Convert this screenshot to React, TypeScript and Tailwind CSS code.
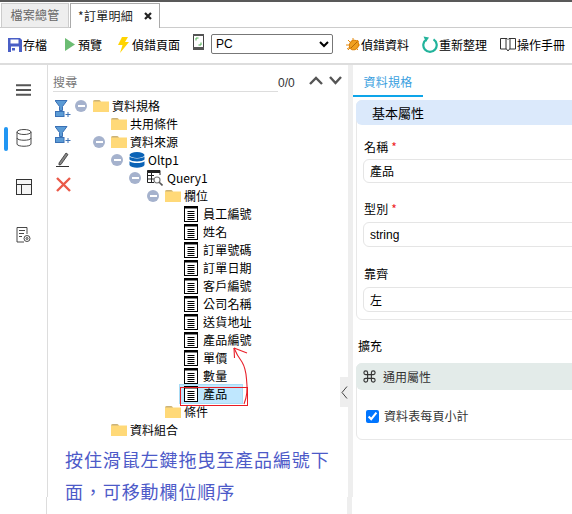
import React from "react";

const font = { fontFamily: '"Noto Sans CJK TC", "Noto Sans", sans-serif' };

function Folder() {
  return (
    <svg width="16" height="12" viewBox="0 0 16 12" className="shrink-0">
      <path d="M0 2 Q0 0 2 0 H6 Q7 0 8 1.5 H16 V12 H0 Z" fill="#ffd978" />
      <path d="M0 2 Q0 0 2 0 H6 Q7 0 8 1.5 H0 Z" fill="#c9b27a" />
    </svg>
  );
}

function Minus() {
  return (
    <span className="w-3 h-3 rounded-full bg-[#a5b2cd] flex items-center justify-center shrink-0">
      <span className="w-[7px] h-[2px] bg-white block" />
    </span>
  );
}

function Doc() {
  return (
    <svg width="14" height="16" viewBox="0 0 14 16" className="shrink-0 ml-px">
      <rect x="0.5" y="0.5" width="13" height="15" fill="#fff" stroke="#000" />
      <rect x="0" y="0" width="14" height="2.5" fill="#000" />
      <path d="M3.5 5.5H10.5M3.5 7.5H10.5M3.5 9.5H10.5M3.5 11.5H10.5M3.5 13.5H10.5" stroke="#000" strokeWidth="1" />
    </svg>
  );
}

function Db() {
  return (
    <svg width="16" height="16" viewBox="0 0 16 16" className="shrink-0">
      <ellipse cx="8" cy="3" rx="7.5" ry="3" fill="#0b63b6" />
      <path d="M.5 4.6C2 7 14 7 15.5 4.6V7.5C14 10 2 10 .5 7.5Z" fill="#0b63b6" />
      <path d="M.5 9.2C2 11.6 14 11.6 15.5 9.2V13C14 16.5 2 16.5 .5 13Z" fill="#0b63b6" />
    </svg>
  );
}

function QueryIcon() {
  return (
    <svg width="16" height="16" viewBox="0 0 16 16" className="shrink-0">
      <path d="M.5 .5H13V2.5H.5ZM.5 2.5V12.5H7M.5 5.5H7M.5 9H7M4.5 2.5V12.5M13 2.5V5" fill="none" stroke="#222" />
      <rect x=".5" y=".5" width="12.5" height="2" fill="#222" />
      <circle cx="10" cy="10" r="3" fill="#fff" stroke="#777" strokeWidth="1.2" />
      <path d="M12.2 12.2L15.5 15.5" stroke="#555" strokeWidth="1.6" />
    </svg>
  );
}

const pad: Record<number, string> = {
  0: "pl-0",
  1: "pl-[18px]",
  2: "pl-[36px]",
  3: "pl-[54px]",
  4: "pl-[72px]",
  5: "pl-[90px]",
};

type Row = { l: number; t: string; toggle?: boolean; icon: "f" | "d" | "q" | "l"; sel?: boolean };

const rows: Row[] = [
  { l: 0, t: "資料規格", toggle: true, icon: "f" },
  { l: 1, t: "共用條件", icon: "f" },
  { l: 1, t: "資料來源", toggle: true, icon: "f" },
  { l: 2, t: "Oltp1", toggle: true, icon: "d" },
  { l: 3, t: "Query1", toggle: true, icon: "q" },
  { l: 4, t: "欄位", toggle: true, icon: "f" },
  { l: 5, t: "員工編號", icon: "l" },
  { l: 5, t: "姓名", icon: "l" },
  { l: 5, t: "訂單號碼", icon: "l" },
  { l: 5, t: "訂單日期", icon: "l" },
  { l: 5, t: "客戶編號", icon: "l" },
  { l: 5, t: "公司名稱", icon: "l" },
  { l: 5, t: "送貨地址", icon: "l" },
  { l: 5, t: "產品編號", icon: "l" },
  { l: 5, t: "單價", icon: "l" },
  { l: 5, t: "數量", icon: "l" },
  { l: 5, t: "產品", icon: "l", sel: true },
  { l: 4, t: "條件", icon: "f" },
  { l: 1, t: "資料組合", icon: "f" },
];

function TreeRow({ r }: { r: Row }) {
  return (
    <div className={"h-[18px] flex items-center text-[12px] leading-[18px] text-black " + pad[r.l]}>
      <span className="w-3 h-3 mr-[6px] shrink-0 flex">{r.toggle ? <Minus /> : null}</span>
      <span
        className={
          "flex items-center h-[18px] " +
          (r.sel ? "bg-[#bfe7fe] -ml-[3px] pl-[3px] w-[62px] outline outline-1 outline-[#a9dcf5]" : "")
        }
      >
        {r.icon === "f" && <Folder />}
        {r.icon === "d" && <Db />}
        {r.icon === "q" && <QueryIcon />}
        {r.icon === "l" && <Doc />}
        <span className={r.icon === "l" ? "ml-[5px] tracking-[0.2px]" : r.icon === "q" ? "ml-1" : "ml-[3px]"}>{r.t}</span>
      </span>
    </div>
  );
}

function ToolBtn({ icon, text, cls }: { icon: React.ReactNode; text: string; cls: string }) {
  return (
    <span className={"flex items-center text-[12px] text-black whitespace-nowrap " + cls}>
      {icon}
      <span>{text}</span>
    </span>
  );
}

function Funnel() {
  return (
    <svg width="16" height="18" viewBox="0 0 16 18">
      <path d="M0 .5H12L7.5 6.5V10.5H4.5V6.5Z" fill="#5b9bd5" stroke="#3a70b5" />
      <rect x=".5" y="11.5" width="8.5" height="5" fill="#5b9bd5" stroke="#3a70b5" />
      <path d="M10.5 14.5H15.5M13 12V17" stroke="#3a70b5" />
    </svg>
  );
}

export default function App() {
  return (
    <div className="w-[572px] h-[514px] overflow-hidden bg-white flex flex-col relative" style={font}>
      <div className="h-[2px] bg-[#595959] shrink-0" />
      <div className="h-[26px] shrink-0 flex items-end pl-px border-b border-[#ccc] relative">
        <div className="w-[68px] h-[24px] pb-px bg-[#eeeeee] border border-[#ccc] border-b-0 flex items-center justify-center text-[12px] text-[#666] tracking-[0.3px]">
          檔案總管
        </div>
        <div className="ml-px w-[90px] h-[25px] pb-px -mb-px bg-white border border-[#aaa] border-b-0 flex items-center pl-[7px] text-[12px] text-[#222] tracking-[0.3px]">
          <span>*訂單明細</span>
          <svg width="8" height="8" viewBox="0 0 8 8" className="ml-[11px]">
            <path d="M1 1L7 7M7 1L1 7" stroke="#222" strokeWidth="2.2" />
          </svg>
        </div>
      </div>
      <div className="h-[37px] shrink-0 pb-[2px] border-b-2 border-[#ddd] flex items-center">
        <ToolBtn
          cls="ml-2"
          text="存檔"
          icon={
            <svg width="14" height="14" viewBox="0 0 14 14" className="mr-px">
              <path d="M0 0H12L14 2V14H0Z" fill="#4a5fc6" />
              <rect x="2.5" y="1.5" width="8" height="4" fill="#fff" />
              <rect x="3" y="8.5" width="8" height="5.5" fill="#fff" />
              <rect x="4" y="10" width="3" height="2.5" fill="#4a5fc6" />
            </svg>
          }
        />
        <ToolBtn
          cls="ml-[18px]"
          text="預覽"
          icon={
            <svg width="10" height="13" viewBox="0 0 10 13" className="mr-[3px]">
              <path d="M0 0L10 6.5L0 13Z" fill="#6cbd73" />
            </svg>
          }
        />
        <ToolBtn
          cls="ml-[16px]"
          text="偵錯頁面"
          icon={
            <svg width="11" height="16" viewBox="0 0 11 16" className="mr-[3px]">
              <path d="M4 0H10L7 5H11L2 16L4.5 8H0Z" fill="#ffd400" />
            </svg>
          }
        />
        <svg width="11" height="16" viewBox="0 0 11 16" className="ml-[13px] mb-[6px]">
          <rect x=".5" y=".5" width="10" height="15" rx="1" fill="#fff" stroke="#444" />
          <rect x="0" y="0" width="11" height="2" fill="#555" />
          <rect x="0" y="13" width="11" height="3" fill="#555" />
          <path d="M3 4V6.5M3 4H5.5M8 11V8.5M8 11H5.5" stroke="#4caf50" fill="none" />
        </svg>
        <select
          defaultValue="PC"
          className="ml-[7px] w-[122px] h-[20px] mb-[2px] border border-[#777] rounded-[2px] bg-white text-[12px] text-black pl-0"
          style={{ fontFamily: '"Liberation Sans", sans-serif' }}
        >
          <option>PC</option>
        </select>
        <ToolBtn
          cls="ml-3"
          text="偵錯資料"
          icon={
            <svg width="16" height="16" viewBox="0 0 16 16">
              <path d="M1 8H15M8 1L8 3M3 3L13 13M13 3L3 13M2 12L14 4" stroke="#e58a0d" strokeWidth="1" />
              <ellipse cx="9" cy="8" rx="4.5" ry="5" transform="rotate(35 9 8)" fill="#f0a020" stroke="#d97f06" />
              <path d="M6 11L12 5" stroke="#b96a05" />
            </svg>
          }
        />
        <ToolBtn
          cls="ml-[13px]"
          text="重新整理"
          icon={
            <svg width="16" height="17" viewBox="0 0 16 17" className="mr-px">
              <path d="M11.5 3.4A6.7 6.7 0 1 1 4.5 3.4" fill="none" stroke="#22b39b" strokeWidth="2.2" />
              <path d="M1.5 .5L7 1.5L4 6Z" fill="#22b39b" />
            </svg>
          }
        />
        <ToolBtn
          cls="ml-[13px]"
          text="操作手冊"
          icon={
            <svg width="16" height="15" viewBox="0 0 16 15" className="mr-px">
              <path d="M.5 1.5H7L8 2.5L9 1.5H15.5V12H9.5L8 14L6.5 12H.5ZM6 1.5V12M10 1.5V12" fill="#fff" stroke="#333" />
            </svg>
          }
        />
      </div>

      <div className="flex-1 flex min-h-0">
        <aside className="w-[48px] shrink-0 border-r border-[#ddd] flex flex-col items-center relative">
          <svg width="15" height="12" viewBox="0 0 15 12" className="mt-[19px]">
            <path d="M0 1.2H15M0 6H15M0 10.8H15" stroke="#555" strokeWidth="2" />
          </svg>
          <svg width="16" height="18" viewBox="0 0 16 18" className="mt-[33px]" fill="none" stroke="#4a4a4a" strokeWidth="1">
            <ellipse cx="8" cy="3" rx="7" ry="2.5" />
            <path d="M1 3V15C1 18 15 18 15 15V3M1 9C1 12 15 12 15 9" />
          </svg>
          <span className="absolute left-1 top-[62px] w-[4px] h-6 rounded-full bg-[#2196f3]" />
          <svg width="16" height="16" viewBox="0 0 16 16" className="mt-[32px]" fill="#f5f5f5" stroke="#333">
            <rect x=".5" y=".5" width="15" height="15" />
            <path d="M.5 5.5H15.5M5.5 5.5V15.5" />
          </svg>
          <svg width="15" height="16" viewBox="0 0 15 16" className="mt-[32px]" fill="none" stroke="#333" strokeWidth=".9">
            <path d="M8 15H1V.5H11V7" />
            <path d="M3 3.5H9M3 6.5H8M3 9.5H6" />
            <circle cx="11" cy="11.5" r="3" />
            <circle cx="11" cy="11.5" r="1" />
          </svg>
        </aside>

        <main className="w-[300px] shrink-0 relative flex flex-col">
          <div className="ml-[5px] h-[26px] mt-px flex items-end text-[12px] shrink-0">
            <span className="w-[225px] border-b border-[#ddd] text-[#777] leading-[18px] tracking-[0.3px]">搜尋</span>
            <span className="leading-[18px] text-[#333]" style={{ fontFamily: '"Liberation Sans", sans-serif' }}>0/0</span>
            <svg width="14" height="9" viewBox="0 0 14 9" className="ml-[14px] mb-[7px]" fill="none" stroke="#555" strokeWidth="2.4">
              <path d="M1 8L7 2L13 8" />
            </svg>
            <svg width="13" height="9" viewBox="0 0 13 9" className="ml-[6px] mb-[7px]" fill="none" stroke="#555" strokeWidth="2.4">
              <path d="M1 1L6.5 7L12 1" />
            </svg>
          </div>
          <div className="flex pt-[5px]">
            <div className="w-[27px] shrink-0 flex flex-col items-end pt-[3px] pr-[4px] gap-[8px]">
              <Funnel />
              <Funnel />
              <svg width="14" height="15" viewBox="0 0 14 15" className="mr-px" fill="none">
                <path d="M3 11L10 1L12 2.5L5 12.5L3 13Z" fill="#888" stroke="#333" strokeWidth=".8" />
                <path d="M0 14.5H13" stroke="#333" />
              </svg>
              <svg width="15" height="15" viewBox="0 0 15 15" className="mt-[2px]">
                <path d="M1 1L14 14M14 1L1 14" stroke="#ea5b4a" strokeWidth="2.4" />
              </svg>
            </div>
            <div className="flex-1 min-w-0">
              {rows.map((r, i) => (
                <TreeRow key={i} r={r} />
              ))}
              <div className="-ml-[10px] mt-[4px] w-[290px] text-[18px] leading-[32px] tracking-[0.9px] text-[#4d5ac8]">
                按住滑鼠左鍵拖曳至產品編號下面，可移動欄位順序
              </div>
            </div>
          </div>

          <div className="absolute -right-px top-[312px] w-[9px] h-[30px] bg-[#eeeeee] flex items-center justify-center">
            <svg width="7" height="13" viewBox="0 0 7 13" fill="none" stroke="#444">
              <path d="M6 .5L1 6.5L6 12.5" />
            </svg>
          </div>

          <div className="absolute left-[132px] top-[322px] w-[68px] h-[19px] border border-[#e81c24]" />
          <svg width="18" height="60" viewBox="0 0 18 60" className="absolute left-[185px] top-[282px]" fill="none" stroke="#e8202a" strokeWidth="1.1">
            <path d="M1 1C3 6 6 11 9 15C12 20 13 25 13.5 32C14.5 40 14 50 11 57" />
            <path d="M1 1L14 6M1 1L1.5 11" />
          </svg>
        </main>

        <div className="w-[5px] shrink-0 bg-[#eeeeee]" />

        <section className="flex-1 min-w-0 overflow-hidden text-[12px] text-black">
          <div className="w-[70px] h-[32px] pt-[3px] border-b-2 border-[#0ea5e9] flex items-center justify-center text-[12px] text-[#3b9fe0] tracking-[0.3px]">
            資料規格
          </div>
          <div className="w-[240px] ml-[3px] mt-[3px] border border-[#e8e8e8] rounded-md h-[220px]">
            <div className="h-[25px] bg-[#dbe9fb] rounded-l-md flex items-center pl-4 text-[13px] -ml-px -mt-px">基本屬性</div>
            <div className="pl-[7px] pt-[13px]">
              <div className="h-[18px] leading-[18px] tracking-[0.2px]">名稱 <span className="text-[#ee2222]">*</span></div>
              <div className="h-[24px] mt-[3px] ml-[-1px] border border-[#e5e5e5] rounded-md flex items-center pl-1.5">產品</div>
              <div className="h-[18px] mt-[17px] leading-[18px] tracking-[0.2px]">型別 <span className="text-[#ee2222]">*</span></div>
              <div className="h-[25px] mt-[4px] ml-[-1px] border border-[#e5e5e5] rounded-md flex items-center pl-1.5" style={{ fontFamily: '"Liberation Sans", sans-serif' }}>string</div>
              <div className="h-[18px] mt-[18px] leading-[18px] tracking-[0.2px]">靠齊</div>
              <div className="h-[25px] mt-[4px] ml-[-1px] border border-[#e5e5e5] rounded-md flex items-center pl-1.5">左</div>
            </div>
          </div>
          <div className="ml-[5px] mt-[17px] h-[18px] leading-[18px]">擴充</div>
          <div className="w-[240px] ml-[3px] mt-[8px] border border-[#e8e8e8] rounded-md h-[77px]">
            <div className="h-[27px] bg-[#e3ebe9] rounded-l-md flex items-center pl-[6px] -ml-px -mt-px text-[#333]">
              <svg width="15" height="15" viewBox="0 0 24 24" fill="none" stroke="#333" strokeWidth="1.8" className="mr-[6px]">
                <path d="M15 6v12a3 3 0 1 0 3-3H6a3 3 0 1 0 3 3V6a3 3 0 1 0-3 3h12a3 3 0 1 0-3-3" />
              </svg>
              通用屬性
            </div>
            <label className="flex items-center mt-[17px] ml-[9px] text-[#333] tracking-[0.1px]">
              <input type="checkbox" defaultChecked className="w-[13px] h-[13px] mr-[5px] accent-[#0075ff]" />
              資料表每頁小計
            </label>
          </div>
        </section>
      </div>

      <div className="absolute left-[46px] bottom-0 h-[17px] w-[2px] bg-white border-l border-[#ddd]" />
      <div className="absolute left-[347px] bottom-0 h-[17px] w-[6px] bg-white border-l-[5px] border-[#eeeeee]" />
    </div>
  );
}
